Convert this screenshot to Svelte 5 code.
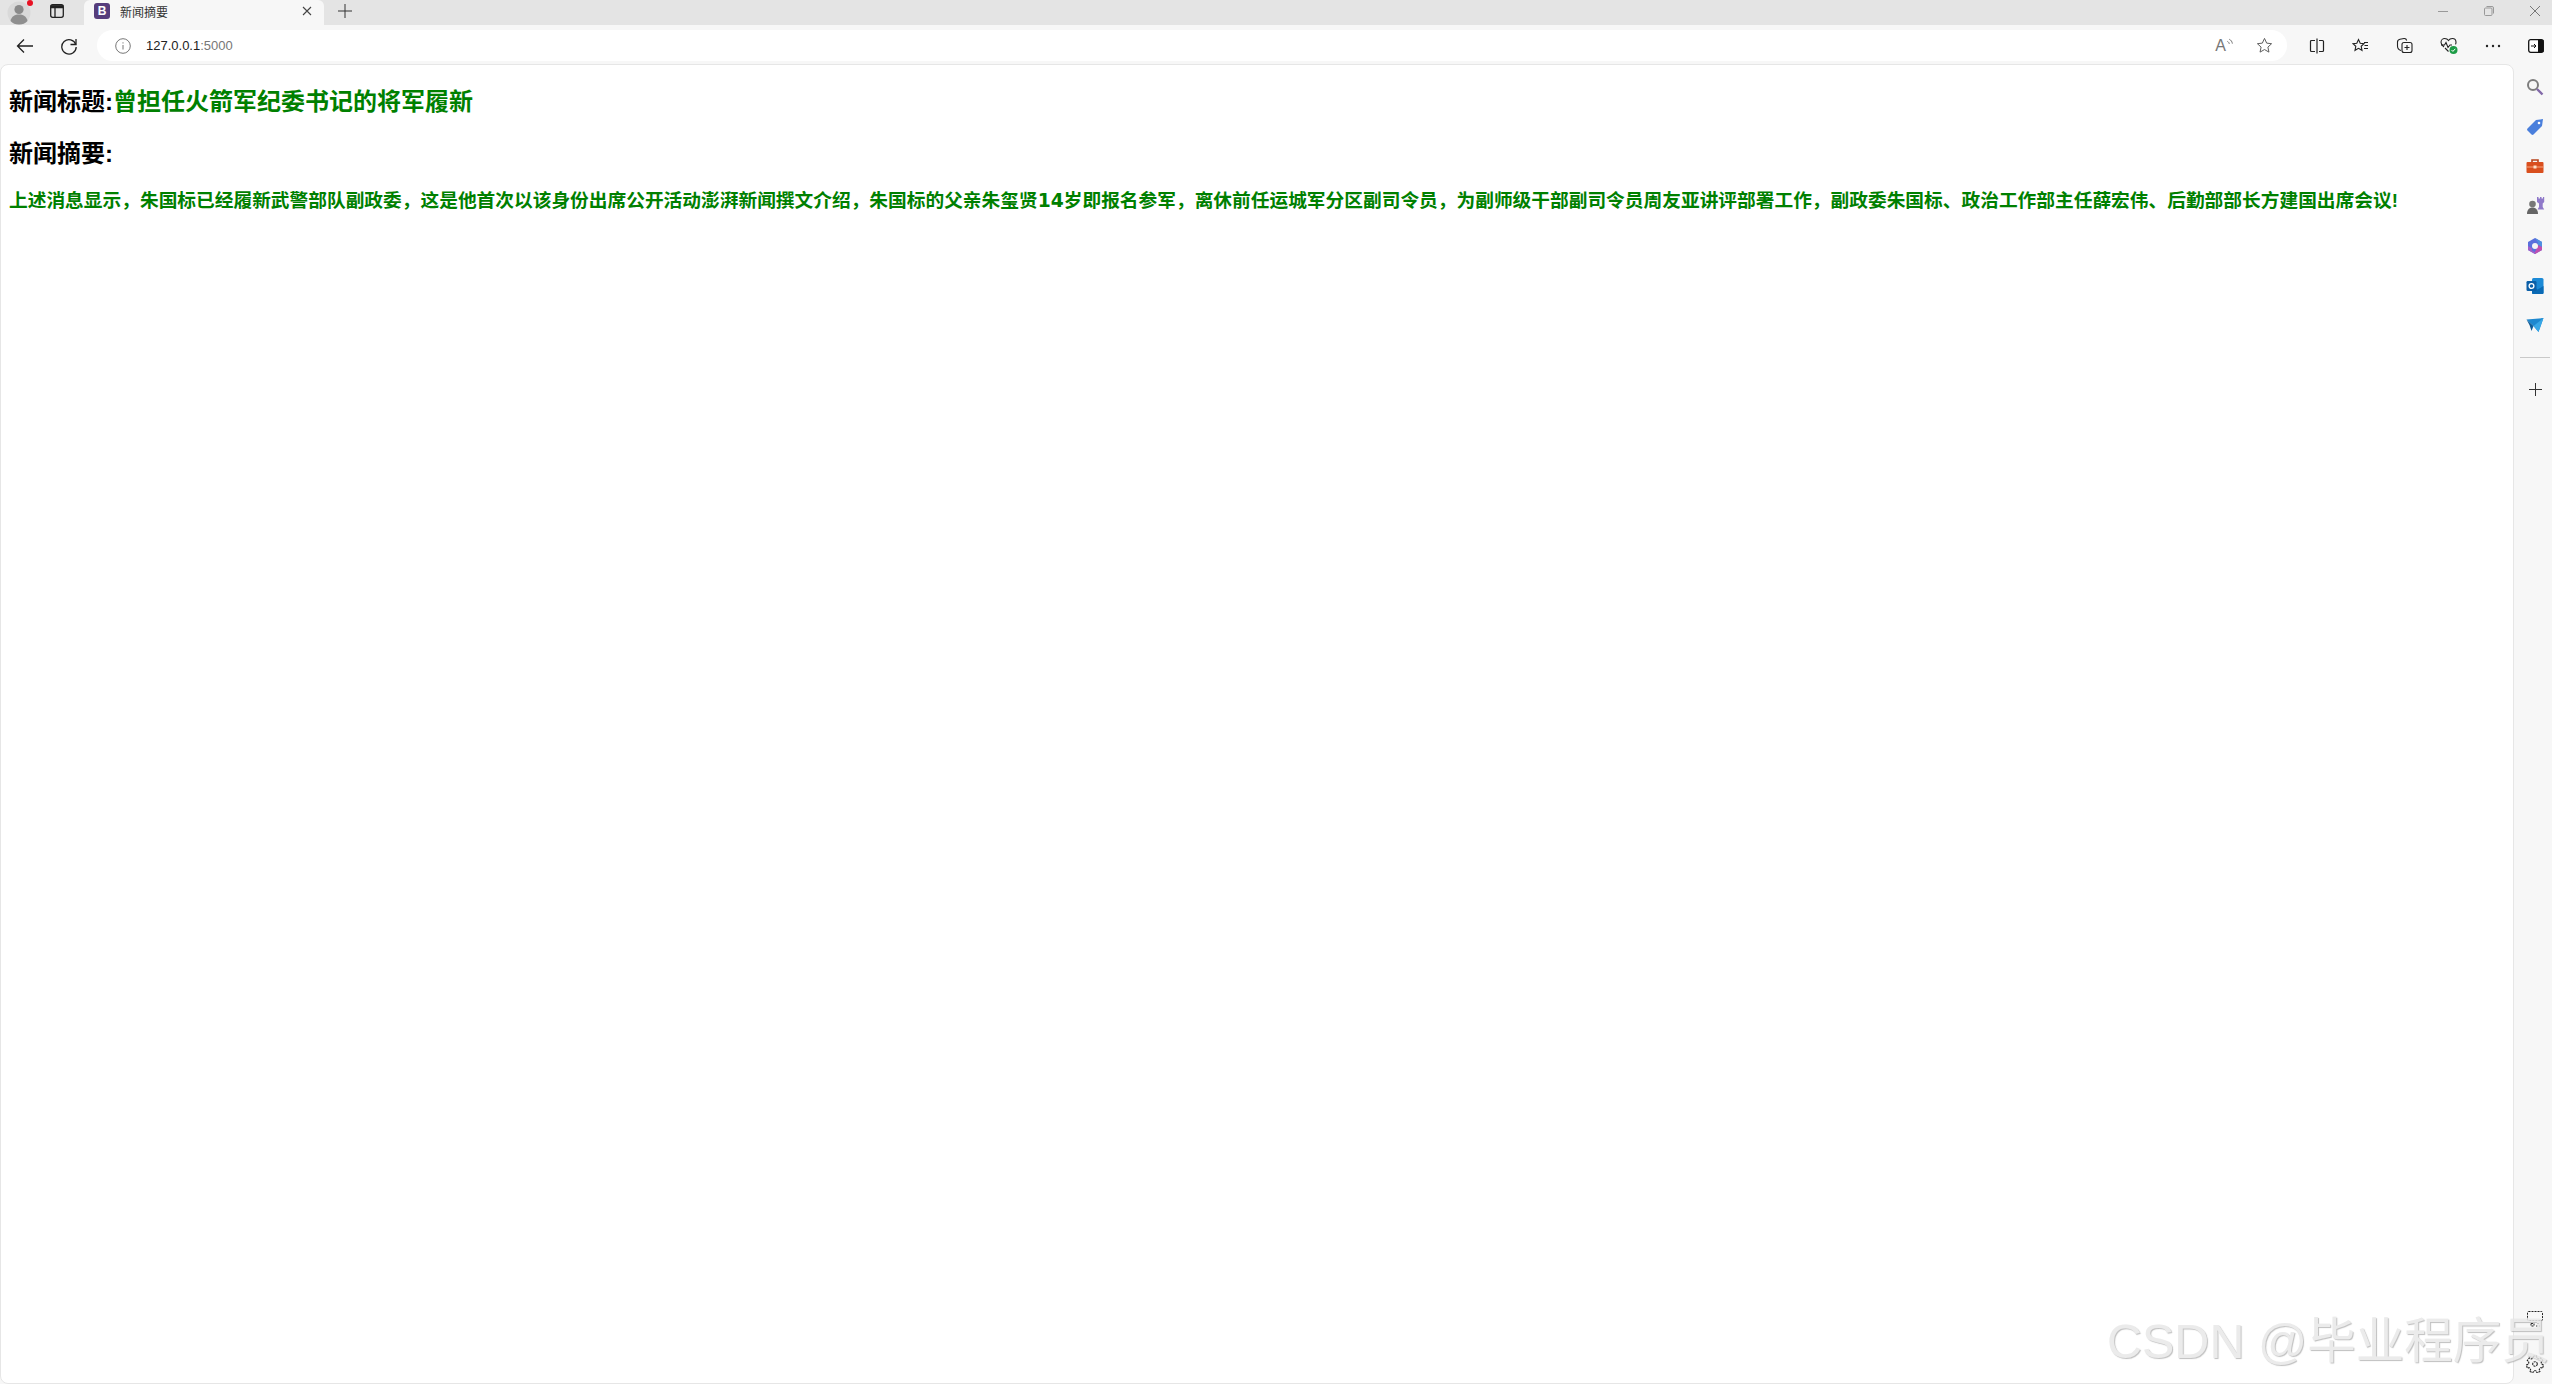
<script>
  const before = '上述消息显示，朱国标已经履新武警部队副政委，这是他首次以该身份出席公开活动澎湃新闻撰文介绍，朱国标的父亲朱玺贤';
  const after = '岁即报名参军，离休前任运城军分区副司令员，为副师级干部副司令员周友亚讲评部署工作，副政委朱国标、政治工作部主任薛宏伟、后勤部部长方建国出席会议!';
</script>

<div class="window">
  <div class="tabstrip">
    <div class="avatar">
      <svg width="28" height="28" viewBox="0 0 28 28"><circle cx="13" cy="13" r="11.5" fill="#d9d9d9"/><circle cx="13" cy="9.5" r="4.6" fill="#8a8a8a"/><path d="M4.5 21c1-5 4.500-6.500 8.500-6.500s7.500 1.500 8.500 6.500c-2 2.500-5 3.500-8.500 3.500s-6.500-1-8.500-3.500z" fill="#8f8f8f"/><circle cx="24" cy="3" r="3" fill="#e81123"/></svg>
    </div>
    <div class="tabs-btn">
      <svg width="16" height="16" viewBox="0 0 16 16" fill="none" stroke="#222" stroke-width="1.300"><rect x="1.700" y="1.700" width="12.600" height="12.600" rx="2"/><path d="M1.700 4.600h12.600M6 4.600v9.700" /><path d="M1.700 3.200h12.600" stroke-width="2.200"/></svg>
    </div>
    <div class="tab">
      <span class="fav">B</span>
      <span class="tab-title">新闻摘要</span>
      <svg class="tab-close" width="10" height="10" viewBox="0 0 10 10" stroke="#444" stroke-width="1.100"><path d="M1 1l8 8M9 1l-8 8"/></svg>
    </div>
    <svg class="newtab" width="14" height="14" viewBox="0 0 14 14" stroke="#333" stroke-width="1"><path d="M7 0v14M0 7h14"/></svg>
    <div class="caption">
      <svg width="12" height="12" viewBox="0 0 12 12" stroke="#999" stroke-width="1" fill="none"><path d="M1 6.500h10"/></svg>
      <svg width="12" height="12" viewBox="0 0 12 12" stroke="#999" stroke-width="1" fill="none"><rect x="1.500" y="3" width="7.500" height="7.500" rx="1"/><path d="M3.500 1.500h5.500a1.500 1.500 0 0 1 1.500 1.500v5.500"/></svg>
      <svg width="12" height="12" viewBox="0 0 12 12" stroke="#777" stroke-width="1" fill="none"><path d="M1 1l10 10M11 1l-10 10"/></svg>
    </div>
  </div>

  <div class="toolbar">
    <svg class="nav" width="18" height="18" viewBox="0 0 18 18" fill="none" stroke="#222" stroke-width="1.300"><path d="M17 9H1.500M8 2.500L1.500 9 8 15.500"/></svg>
    <svg class="nav reload" width="18" height="18" viewBox="0 0 18 18" fill="none" stroke="#222" stroke-width="1.300"><path d="M15.800 7.500A7.200 7.200 0 1 0 16.200 10"/><path d="M16 2v5.500h-5.500"/></svg>
    <div class="address">
      <svg width="16" height="16" viewBox="0 0 16 16" fill="none" stroke="#777" stroke-width="1"><circle cx="8" cy="8" r="7.300"/><path d="M8 7v4.500M8 4.300v1.200"/></svg>
      <span class="url">127.0.0.1<span class="port">:5000</span></span>
      <span class="spacer"></span>
      <span class="read">A<svg width="9" height="10" viewBox="0 0 7 8" fill="none" stroke="#777" stroke-width=".8"><path d="M1 3.500c1 .5 1.300 1 1.500 2M2.500 1.800c1.600.8 2.200 1.800 2.500 3.500"/></svg></span>
      <svg width="17" height="17" viewBox="0 0 18 18" fill="none" stroke="#555" stroke-width="1"><path d="M9 1.500l2.300 5 5.200.6-3.900 3.600 1.100 5.300L9 13.300 4.300 16l1.100-5.300L1.500 7.100l5.200-.6z"/></svg>
    </div>
    <div class="tools">
      <svg width="16" height="16" viewBox="0 0 16 16" fill="none" stroke="#222" stroke-width="1.200"><path d="M6 2.500H2.500a1 1 0 0 0-1 1v9a1 1 0 0 0 1 1H6M10 2.500h3.500a1 1 0 0 1 1 1v9a1 1 0 0 1-1 1H10M8 .5v15"/></svg>
      <svg width="17" height="16" viewBox="0 0 17 16" fill="none" stroke="#222" stroke-width="1.100"><path d="M6.500 1.500l1.700 3.800 3.800.4-2.800 2.600.8 4-3.500-2-3.500 2 .8-4L1 5.700l3.800-.4z"/><path d="M12 4.500h4M12.500 7.500h3.500M12 10.500h4"/></svg>
      <svg width="17" height="17" viewBox="0 0 17 17" fill="none" stroke="#222" stroke-width="1.100"><rect x="6" y="5.500" width="10" height="10" rx="2"/><path d="M11 8v5M8.500 10.500h5M5 13.500C3 13 1.500 11 1.500 9V5c0-1.500 1-2.500 2.500-2.800l4-.7c1.300-.2 2.300.5 2.700 2"/></svg>
      <svg width="19" height="18" viewBox="0 0 19 18" fill="none"><path d="M4 10C2 8.500 1 7 1 5.200 1 3 2.700 1.500 4.700 1.500c1.700 0 3 .8 3.800 2 .8-1.200 2.100-2 3.800-2 2 0 3.700 1.500 3.700 3.700 0 .8-.2 1.500-.5 2.200" stroke="#222" stroke-width="1.100"/><path d="M1 8h3.500l1.500-2.500 2 5L10 8h2M5 11l3.500 3.500" stroke="#222" stroke-width="1.100"/><circle cx="13.500" cy="13" r="4" fill="#1c9c46"/><path d="M11.500 13l1.400 1.400 2.400-2.600" stroke="#fff" stroke-width="1"/></svg>
      <svg class="dots" width="16" height="4" viewBox="0 0 16 4" fill="#222"><circle cx="2" cy="2" r="1.200"/><circle cx="8" cy="2" r="1.200"/><circle cx="14" cy="2" r="1.200"/></svg>
      <svg class="panel" width="16" height="14" viewBox="0 0 16 14"><rect x=".7" y=".7" width="14.600" height="12.600" rx="2" fill="#fff" stroke="#111" stroke-width="1.300"/><rect x="10" y="1" width="5.500" height="12" fill="#111"/><path d="M3 7h5M6 5l2 2-2 2" fill="none" stroke="#111" stroke-width="1"/></svg>
    </div>
  </div>

  <div class="body">
    <main class="page">
      <h2>新闻标题:<span class="green">曾担任火箭军纪委书记的将军履新</span></h2>
      <h2 class="second">新闻摘要:</h2>
      <h3 class="green">{before}<span class="num">14</span>{after}</h3>
    </main>

    <aside class="sidebar">
      <div class="side-icons">
        <svg width="18" height="18" viewBox="0 0 18 18" fill="none"><circle cx="7" cy="7" r="5" stroke="#7d7d7d" stroke-width="2"/><path d="M11 11l5.500 5.500" stroke="#8269a8" stroke-width="2.400"/></svg>
        <svg width="18" height="18" viewBox="0 0 18 18"><path d="M1.500 10.500L10 2l7-1-1 7-8.500 8.500a1.500 1.500 0 0 1-2 0l-4-4a1.500 1.500 0 0 1 0-2z" fill="#4a7fdc"/><circle cx="13" cy="5" r="1.300" fill="#fff"/></svg>
        <svg width="18" height="16" viewBox="0 0 18 16"><path d="M6 4V2h6v2" fill="none" stroke="#b7441c" stroke-width="1.600"/><rect x="0.500" y="4" width="17" height="11" rx="1" fill="#d94f1e"/><rect x="0.500" y="8.500" width="17" height="1" fill="#f5a67f"/><rect x="7.500" y="7.500" width="3" height="3" fill="#fde1c9"/></svg>
        <svg width="19" height="19" viewBox="0 0 19 19"><circle cx="6.500" cy="8" r="3.300" fill="#777"/><path d="M1 18c0-4 2-6.500 5.500-6.500S12 14 12 18z" fill="#666"/><path d="M11 1h1.500v1.500H14V1h1.500v1.500H17V1h1.200v5L16.700 7.500V11l1.500 2.500H11.500L13 11V7.500L11 6z" fill="#8f79c9"/></svg>
        <svg width="18" height="18" viewBox="0 0 18 18"><path d="M9 1l7 4v8l-7 4-7-4V5z" fill="#5a6fdc"/><path d="M9 1l7 4v5l-4-2.300V5.500z" fill="#4f8fe0"/><path d="M2 9l4 2.500v2l3 1.800L9 17l-7-4z" fill="#a45fc9"/><path d="M12 8l4 2v3l-7 4v-2z" fill="#c04fb0"/><circle cx="9" cy="9" r="3" fill="#f4f4f4"/></svg>
        <svg width="18" height="18" viewBox="0 0 18 18"><rect x="6" y="1" width="11.500" height="16" rx="1.500" fill="#1c8ad6"/><path d="M6 9l5.500 3.500L17.500 9v7a1 1 0 0 1-1 1H7a1 1 0 0 1-1-1z" fill="#0a6ab5"/><rect x="0.500" y="4" width="10" height="10" rx="1.200" fill="#0b5fa8"/><circle cx="5.500" cy="9" r="2.400" fill="none" stroke="#fff" stroke-width="1.300"/></svg>
        <svg width="18" height="16" viewBox="0 0 18 16"><path d="M0.500 2.500L17.500 1l-5 14-5-6z" fill="#1e88cf"/><path d="M0.500 2.500L7.500 9 5.500 14 3.500 8z" fill="#0f5d99"/><path d="M17.500 1L7.500 9l5 6z" fill="#38a7e6"/></svg>
      </div>
      <div class="side-rule"></div>
      <svg class="side-add" width="13" height="13" viewBox="0 0 13 13" stroke="#333" stroke-width="1"><path d="M6.500 0v13M0 6.500h13"/></svg>
      <div class="spacer"></div>
      <div class="side-bottom">
        <svg width="16" height="16" viewBox="0 0 16 16" fill="none" stroke="#222" stroke-width="1" stroke-dasharray="2 1"><rect x=".5" y=".5" width="15" height="9" rx="1"/><path d="M4 12.500h3v2.500H4zM10 12.500h2.500M9 15h4"/></svg>
        <svg width="18" height="18" viewBox="0 0 18 18" fill="none" stroke="#222" stroke-width="1.100" stroke-dasharray="2 .8"><path d="M7.500 1h3l.5 2.200 1.700.8 2-1 2 2.500-1.500 1.700.3 1.800 2 .9-.8 3-2.200-.1-1.200 1.500.6 2.200-2.800 1.300-1.200-2H8l-1.300 2-2.700-1.300.6-2.200-1.200-1.500-2.200.1-.7-3 2-.9.300-1.800L1.300 5.500l2-2.500 2 1 1.700-.8z"/><circle cx="9" cy="9" r="2.300"/></svg>
      </div>
    </aside>
  </div>

  <div class="watermark">CSDN @毕业程序员</div>
</div>

<style>
  :global(body) {
    margin: 0;
    background: #f7f7f7;
    overflow: hidden;
  }

  .window {
    position: relative;
    width: 2552px;
    height: 1384px;
    display: flex;
    flex-direction: column;
    overflow: hidden;
    font-family: "Liberation Sans", "Noto Sans CJK SC", sans-serif;
    color: #000;
    background: #f7f7f7;
  }

  .tabstrip {
    height: 25px;
    flex: none;
    box-sizing: border-box;
    padding-bottom: 3px;
    display: flex;
    align-items: center;
    background: #e4e4e4;
  }

  .avatar {
    width: 28px;
    margin-left: 6px;
    height: 25px;
    margin-bottom: -3px;
    overflow: hidden;
    flex: none;
  }

  .tabs-btn {
    display: flex;
    width: 16px;
    margin-left: 15px;
    flex: none;
  }

  .tab {
    margin-left: 19px;
    width: 240px;
    box-sizing: border-box;
    height: 25px;
    margin-bottom: -3px;
    padding: 0 9px 3px 10px;
    background: #f7f7f7;
    border-radius: 6px 6px 0 0;
    display: flex;
    align-items: center;
    flex: none;
  }

  .fav {
    width: 16px;
    height: 16px;
    border-radius: 3px;
    background: #563d7c;
    color: #fff;
    font-size: 12px;
    font-weight: 700;
    line-height: 16px;
    text-align: center;
    flex: none;
  }

  .tab-title {
    margin-left: 10px;
    font-size: 12px;
    color: #333;
    flex: 1;
  }

  .tab-close {
    margin-right: 3px;
  }

  .newtab {
    margin-left: 14px;
  }

  .caption {
    margin-left: auto;
    display: flex;
    gap: 34px;
    padding-right: 11px;
  }

  .toolbar {
    height: 39px;
    flex: none;
    display: flex;
    align-items: center;
    box-sizing: border-box;
    padding-top: 2px;
    background: #f7f7f7;
  }

  .nav {
    margin-left: 16px;
    flex: none;
  }

  .reload {
    margin-left: 26px;
  }

  .address {
    margin-left: 19px;
    width: 2190px;
    box-sizing: border-box;
    height: 31px;
    border-radius: 16px;
    background: #fff;
    display: flex;
    align-items: center;
    padding: 0 14px 0 18px;
  }

  .url {
    margin-left: 15px;
    font-size: 13px;
    color: #222;
  }

  .port {
    color: #777;
  }

  .spacer {
    flex: 1;
  }

  .read {
    display: flex;
    align-items: flex-start;
    font-size: 16px;
    color: #777;
    margin-right: 21px;
  }

  .tools {
    margin-left: 22px;
    display: flex;
    align-items: center;
    gap: 27px;
  }

  .tools .dots {
    margin-left: -1px;
  }

  .body {
    flex: 1;
    min-height: 0;
    display: flex;
  }

  .page {
    width: 2514px;
    flex: none;
    box-sizing: border-box;
    padding: 23px 8px 0;
    background: #fff;
    border: 1px solid #e6e6e6;
    border-radius: 8px;
  }

  h2 {
    margin: 0;
    font-size: 24px;
    line-height: 27px;
    font-weight: 700;
  }

  .second {
    margin-top: 25px;
  }

  h3 {
    margin: 23px 0 0;
    font-size: 18.720px;
    line-height: 22px;
    font-weight: 700;
  }

  .num {
    font-family: "DejaVu Sans", sans-serif;
  }

  .green {
    color: #008000;
  }

  .sidebar {
    flex: 1;
    display: flex;
    flex-direction: column;
    align-items: center;
    padding: 14px 0 11px 4px;
    background: #f7f7f7;
  }

  .side-icons {
    display: flex;
    flex-direction: column;
    align-items: center;
    gap: 22px;
  }

  .side-rule {
    width: 30px;
    height: 1px;
    margin-top: 24px;
    background: #c9c9c9;
  }

  .side-add {
    margin-top: 25px;
  }

  .side-bottom {
    display: flex;
    flex-direction: column;
    align-items: center;
    gap: 28px;
  }

  .watermark {
    position: absolute;
    left: 2107px;
    top: 1313px;
    font-size: 48.500px;
    line-height: 56px;
    white-space: nowrap;
    color: #e8e8e8;
    text-shadow: 1px 1px 1px #b5b5b5;
    opacity: .85;
  }
</style>
